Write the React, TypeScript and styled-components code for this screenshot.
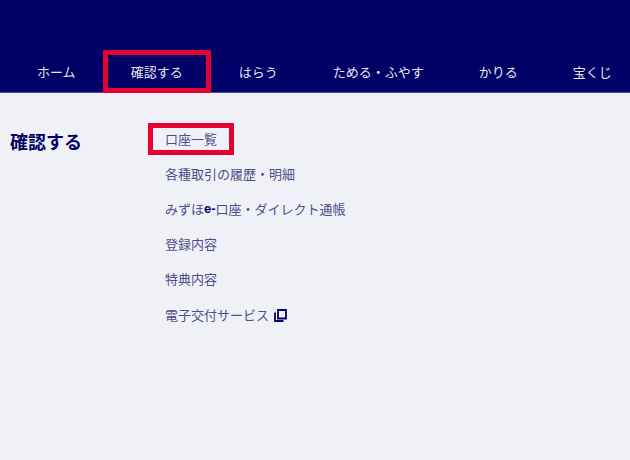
import styled, { createGlobalStyle } from 'styled-components';

const GlobalStyle = createGlobalStyle`
  * {
    box-sizing: border-box;
  }

  html,
  body {
    margin: 0;
    padding: 0;
    background: #f0f1f7;
  }
`;

const navItems = [
  { label: 'ホーム' },
  { label: '確認する', boxed: true },
  { label: 'はらう' },
  { label: 'ためる・ふやす' },
  { label: 'かりる' },
  { label: '宝くじ' },
];

export default function App() {
  return (
    <Page>
      <GlobalStyle />
      <Header>
        <Nav>
          {navItems.map((item) => (
            <NavItem key={item.label} $boxed={item.boxed}>
              {item.label}
            </NavItem>
          ))}
        </Nav>
      </Header>

      <Content>
        <Title>確認する</Title>
        <Menu>
          <MenuItem $boxed>口座一覧</MenuItem>
          <MenuItem>各種取引の履歴・明細</MenuItem>
          <MenuItem>
            みずほ<Strong>e-</Strong>口座・ダイレクト通帳
          </MenuItem>
          <MenuItem>登録内容</MenuItem>
          <MenuItem>特典内容</MenuItem>
          <MenuItem>
            電子交付サービス
            <CopyIcon viewBox="0 0 13 13">
              <path d="M4 1h8v8.500h-8z" fill="none" stroke="#000066" strokeWidth="1.800" />
              <path d="M1 3.500v8.500h8.500" fill="none" stroke="#000066" strokeWidth="1.800" />
            </CopyIcon>
          </MenuItem>
        </Menu>
      </Content>
    </Page>
  );
}

const Page = styled.div`
  width: 630px;
  height: 460px;
  overflow: hidden;
  background: #f0f1f7;
  font-family: 'Liberation Sans', 'Noto Sans CJK JP', sans-serif;
`;

const Header = styled.header`
  height: 93px;
  padding-top: 50px;
  background: #000066;
  border-bottom: 1px solid #4d4d94;
`;

const Nav = styled.nav`
  display: flex;
  height: 43px;
  padding-left: 9px;
`;

const NavItem = styled.div<{ $boxed?: boolean }>`
  display: flex;
  flex: none;
  align-items: center;
  padding: 0 ${(p) => (p.$boxed ? '28px' : '27px')} 1px 28px;
  color: #e6e6f0;
  font-size: 13px;
  white-space: nowrap;
  outline: ${(p) => (p.$boxed ? '5px solid #e60033' : 'none')};
  outline-offset: -5px;
`;

const Content = styled.main`
  display: flex;
  padding: 30px 0 0 10px;
`;

const Title = styled.h2`
  width: 138px;
  margin: 0;
  padding-top: 10px;
  color: #000066;
  font-size: 18px;
  font-weight: 700;
  line-height: 20px;
`;

const Menu = styled.ul`
  display: flex;
  flex-direction: column;
  gap: 3.2px;
  margin: 0;
  padding: 0;
  list-style: none;
`;

const MenuItem = styled.li<{ $boxed?: boolean }>`
  display: flex;
  align-items: center;
  align-self: flex-start;
  height: 32px;
  padding: 0 17px 1.6px;
  color: #4d4d8c;
  font-size: 13px;
  white-space: pre;
  outline: ${(p) => (p.$boxed ? '5px solid #e60033' : 'none')};
  outline-offset: -5px;
`;

const Strong = styled.b`
  color: #000066;
`;

const CopyIcon = styled.svg`
  width: 13px;
  height: 13px;
  margin: 2px 0 0 5px;
`;
